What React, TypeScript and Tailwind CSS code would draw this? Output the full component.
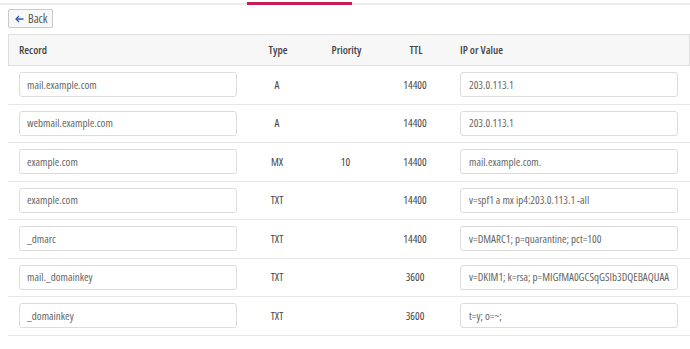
import React from "react";

const rows = [
  { name: "mail.example.com", type: "A", prio: "", ttl: "14400", value: "203.0.113.1" },
  { name: "webmail.example.com", type: "A", prio: "", ttl: "14400", value: "203.0.113.1" },
  { name: "example.com", type: "MX", prio: "10", ttl: "14400", value: "mail.example.com." },
  { name: "example.com", type: "TXT", prio: "", ttl: "14400", value: "v=spf1 a mx ip4:203.0.113.1 -all" },
  { name: "_dmarc", type: "TXT", prio: "", ttl: "14400", value: "v=DMARC1; p=quarantine; pct=100" },
  { name: "mail._domainkey", type: "TXT", prio: "", ttl: "3600", value: "v=DKIM1; k=rsa; p=MIGfMA0GCSqGSIb3DQEBAQUAA" },
  { name: "_domainkey", type: "TXT", prio: "", ttl: "3600", value: "t=y; o=~;" },
];

export default function App() {
  return (
    <div className="w-[690px] h-[349px] bg-white overflow-hidden text-[11px] font-['Open_Sans',sans-serif] font-stretch-[78%]">
      <div className="relative h-[5px]">
        <div className="absolute left-0 right-0 top-[3px] h-[2px] bg-[#ececec]" />
        <div className="absolute left-[247px] w-[105px] top-[2px] h-[3px] bg-[#c81e55]" />
      </div>
      <div className="pl-2 pt-[4px]">
        <button className="flex items-center gap-[4px] h-[19px] w-[45px] pl-[6px] border border-[#c9c9c9] rounded-[2px] bg-[#f8f8f8] text-[#555] text-[12px]">
          <svg className="shrink-0" width="9" height="8" viewBox="0 0 9 8" fill="none" stroke="#2d5ea8" strokeWidth="1.3">
            <path d="M8.5 4H1.2M4 1L1 4l3 3" />
          </svg>
          <span>Back</span>
        </button>
      </div>
      <div className="pl-2 mt-[6px]">
        <div className="grid grid-cols-[240px_58px_79px_60px_1fr] h-[32px] items-center bg-[#f7f7f7] border border-[#dedede] text-[#444] font-semibold text-[11px]">
          <div className="pl-[10px]">Record</div>
          <div className="text-center">Type</div>
          <div className="text-center">Priority</div>
          <div className="text-center">TTL</div>
          <div className="pl-[14px]">IP or Value</div>
        </div>
        {rows.map((r, i) => (
          <div
            key={i}
            className="grid grid-cols-[240px_58px_79px_60px_1fr] h-[38.5px] items-center border-b border-[#e6e6e6]"
          >
            <div className="pl-[11px]">
              <div className="w-[218px] h-[25px] border border-[#dcdcdc] rounded-[3px] flex items-center px-[7px] text-[#666] whitespace-nowrap overflow-hidden">
                {r.name}
              </div>
            </div>
            <div className="text-center text-[#444]">{r.type}</div>
            <div className="text-center text-[#444]">{r.prio}</div>
            <div className="text-center text-[#444]">{r.ttl}</div>
            <div className="pl-[15px]">
              <div className="w-[218px] h-[25px] border border-[#dcdcdc] rounded-[3px] flex items-center px-[8px] text-[#666] whitespace-nowrap overflow-hidden">
                {r.value}
              </div>
            </div>
          </div>
        ))}
      </div>
    </div>
  );
}
